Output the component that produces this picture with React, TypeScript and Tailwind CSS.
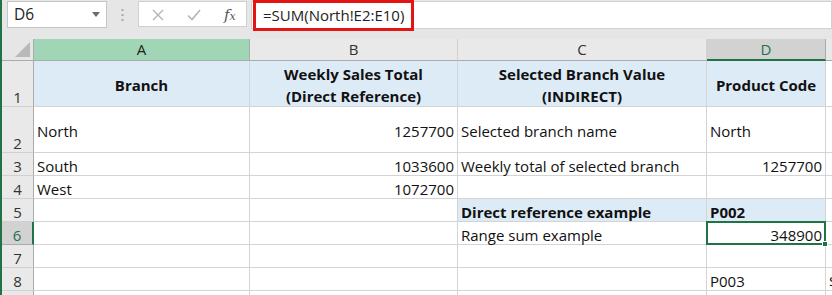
import React from "react";

const FONT = { fontFamily: "'Open Sans', Lato, 'Liberation Sans', sans-serif" };

type Cell = {
  text?: string;
  align?: "left" | "right" | "center";
  bold?: boolean;
  blue?: boolean;
  lines?: string[];
};

type Row = { num: string; h: number; v: "center" | "end"; cells: Cell[]; active?: boolean };

const rows: Row[] = [
  {
    num: "1",
    h: 46,
    v: "center",
    cells: [
      { lines: ["Branch"], align: "center", bold: true, blue: true },
      { lines: ["Weekly Sales Total", "(Direct Reference)"], align: "center", bold: true, blue: true },
      { lines: ["Selected Branch Value", "(INDIRECT)"], align: "center", bold: true, blue: true },
      { lines: ["Product Code"], align: "center", bold: true, blue: true },
      {},
    ],
  },
  {
    num: "2",
    h: 46,
    v: "center",
    cells: [
      { text: "North" },
      { text: "1257700", align: "right" },
      { text: "Selected branch name" },
      { text: "North" },
      {},
    ],
  },
  {
    num: "3",
    h: 23,
    v: "end",
    cells: [
      { text: "South" },
      { text: "1033600", align: "right" },
      { text: "Weekly total of selected branch" },
      { text: "1257700", align: "right" },
      {},
    ],
  },
  {
    num: "4",
    h: 23,
    v: "end",
    cells: [{ text: "West" }, { text: "1072700", align: "right" }, {}, {}, {}],
  },
  {
    num: "5",
    h: 23,
    v: "end",
    cells: [{}, {}, { text: "Direct reference example", bold: true, blue: true }, { text: "P002", bold: true, blue: true }, {}],
  },
  {
    num: "6",
    h: 23,
    v: "end",
    active: true,
    cells: [{}, {}, { text: "Range sum example" }, { text: "348900", align: "right" }, {}],
  },
  { num: "7", h: 23, v: "end", cells: [{}, {}, {}, {}, {}] },
  { num: "8", h: 23, v: "end", cells: [{}, {}, {}, { text: "P003" }, { text: "$" }] },
  { num: "", h: 23, v: "end", cells: [{}, {}, {}, {}, {}] },
];

const colLetters = ["A", "B", "C", "D", ""];

function DataCell({ cell, row, ci }: { cell: Cell; row: Row; ci: number }) {
  const isActive = row.active && ci === 3;
  const justify =
    cell.align === "right" ? "justify-end" : cell.align === "center" ? "justify-center" : "justify-start";
  const items = row.v === "center" ? "items-center pt-[2px]" : "items-end";
  return (
    <div
      className={`relative flex ${items} ${justify} border-r border-b border-[#d4d4d4] ${
        cell.blue ? "bg-[#ddebf7]" : "bg-white"
      } ${cell.align === "right" ? "pr-[3px]" : cell.align === "center" ? "" : "pl-[3px]"} whitespace-nowrap`}
      style={{ height: row.h }}
    >
      {cell.lines ? (
        <div className={`flex flex-col items-center text-[15px] leading-[22px] text-[#111] ${cell.bold ? "font-bold" : ""}`}>
          {cell.lines.map((l) => (
            <span key={l}>{l}</span>
          ))}
        </div>
      ) : cell.text ? (
        <span
          className={`text-[15px] ${row.v === "center" ? "leading-[22px]" : "leading-[18px]"} text-[#111] ${
            cell.bold ? "font-bold" : ""
          }`}
        >
          {cell.text}
        </span>
      ) : null}
      {isActive && (
        <>
          <div className="absolute left-[-1px] top-[-1px] w-[120px] h-[24px] border-2 border-[#217346] pointer-events-none" />
          <div className="absolute right-[-3px] bottom-[-3px] w-[6px] h-[6px] bg-[#217346] border border-white z-10" />
        </>
      )}
    </div>
  );
}

export default function App() {
  return (
    <div className="w-[832px] h-[295px] overflow-hidden bg-[#e6e6e6] border-l-2 border-[#217346] relative" style={FONT}>
      {/* Formula bar */}
      <div className="flex items-start h-[39px] pt-[1px]">
        <div className="ml-[5px] w-[100px] h-[27px] bg-white border border-[#c6c6c6] flex items-center justify-between pl-[6px] pr-[6px]">
          <span className="text-[15.5px] text-[#222]">D6</span>
          <svg width="8" height="5" viewBox="0 0 8 5">
            <path d="M0 0 L8 0 L4 5 Z" fill="#6b6b6b" />
          </svg>
        </div>
        <div className="w-[31px] h-[27px] flex items-center justify-center">
          <svg width="3" height="12" viewBox="0 0 3 12">
            <rect x="0.5" y="0" width="2" height="2" fill="#a8a8a8" />
            <rect x="0.5" y="5" width="2" height="2" fill="#a8a8a8" />
            <rect x="0.5" y="10" width="2" height="2" fill="#a8a8a8" />
          </svg>
        </div>
        <div className="w-[109px] h-[26px] bg-white border border-[#d0d0d0] flex items-center relative">
          <svg className="absolute left-[13px] top-[7px]" width="12" height="12" viewBox="0 0 12 12">
            <path d="M1 1 L11 11 M11 1 L1 11" stroke="#b4b4b4" strokeWidth="1.4" fill="none" />
          </svg>
          <svg className="absolute left-[48px] top-[7px]" width="14" height="12" viewBox="0 0 14 12">
            <path d="M1 6.5 L5 10.5 L13 1" stroke="#b4b4b4" strokeWidth="1.6" fill="none" />
          </svg>
          <span
            className="absolute left-[85px] top-[2px] text-[15px] italic text-[#555]"
            style={{ fontFamily: "'DejaVu Serif', 'Liberation Serif', serif" }}
          >
            f<span className="text-[11px]">x</span>
          </span>
        </div>
        <div className="ml-[4px] flex-1 h-[28px] bg-white border border-[#d0d0d0] flex items-center pl-[11px]">
          <span className="text-[15px] text-[#222]">=SUM(North!E2:E10)</span>
        </div>
      </div>
      {/* red annotation box */}
      <div className="absolute left-[251px] top-0 w-[161px] h-[31px] border-[3px] border-[#e31414]" />

      {/* Grid */}
      <div className="grid grid-cols-[32px_216px_208px_249px_119px_1fr] overflow-hidden">
        {/* header row */}
        <div className="h-[22px] bg-[#e6e6e6] border-r border-b border-[#ababab] relative">
          <svg className="absolute right-[3px] bottom-[3px]" width="15" height="15" viewBox="0 0 15 15">
            <path d="M15 0 L15 15 L0 15 Z" fill="#b9b9b9" />
          </svg>
        </div>
        {colLetters.map((c, i) => {
          const isA = i === 0;
          const isD = i === 3;
          return (
            <div
              key={i}
              className={`h-[22px] flex items-center justify-center text-[15px] border-r ${
                isD
                  ? "bg-[#d2d2d2] text-[#217346] border-b-2 border-b-[#217346] border-r-[#ababab]"
                  : isA
                  ? "bg-[#a0d6b6] text-[#222] border-b border-[#ababab]"
                  : "bg-[#e9e9e9] text-[#333] border-b border-b-[#ababab] border-r-[#d0d0d0]"
              }`}
            >
              {c}
            </div>
          );
        })}
        {rows.map((row, ri) => (
          <React.Fragment key={ri}>
            <div
              className={`flex items-end justify-center pb-0 text-[15px] leading-[18px] ${
                row.active
                  ? "bg-[#d2d2d2] text-[#217346] border-r-2 border-r-[#217346] border-b border-b-[#ababab]"
                  : "bg-[#e9e9e9] text-[#333] border-r border-b border-r-[#ababab] border-b-[#d0d0d0]"
              }`}
              style={{ height: row.h }}
            >
              {row.num}
            </div>
            {row.cells.map((cell, ci) => (
              <DataCell key={ci} cell={cell} row={row} ci={ci} />
            ))}
          </React.Fragment>
        ))}
      </div>
    </div>
  );
}
